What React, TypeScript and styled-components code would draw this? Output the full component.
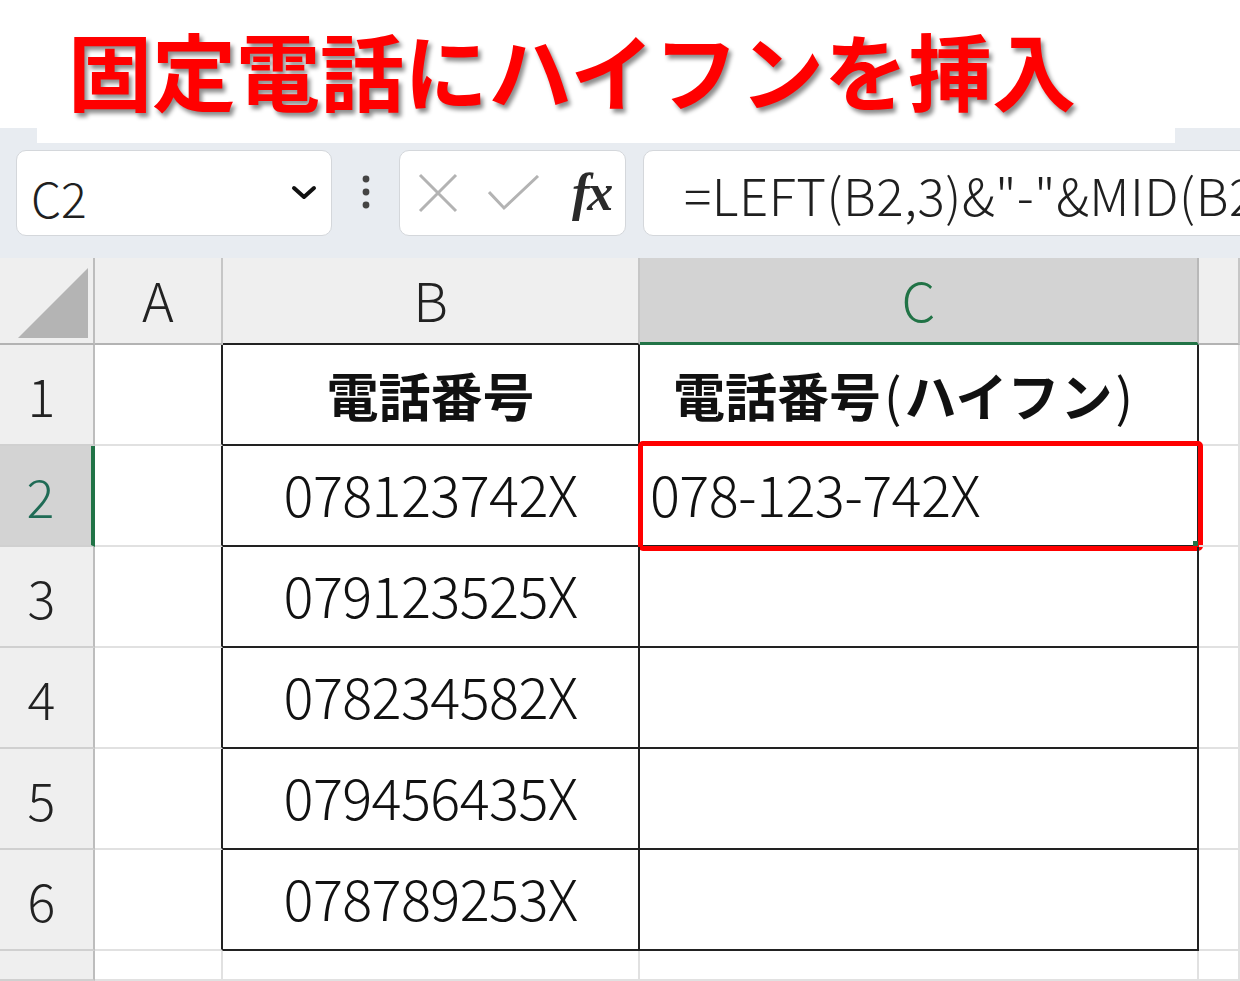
import React from 'react';
import styled, { createGlobalStyle } from 'styled-components';

const GlobalStyle = createGlobalStyle`
  html, body {
    margin: 0;
    padding: 0;
    background: #ffffff;
  }
  body {
    font-family: "Noto Sans CJK JP", "Noto Sans", sans-serif;
  }
`;

const GREEN = '#217346';
const GRID = '#e1e1e1';
const INK = '#222222';

const Page = styled.div`
  width: 1240px;
  height: 981px;
  overflow: hidden;
  display: flex;
  flex-direction: column;
  background: #ffffff;
`;

const TitleBar = styled.header`
  height: 128px;
  flex: none;
  box-sizing: border-box;
  padding: 27px 0 0 68px;
  background: #ffffff;
`;

const Title = styled.h1`
  margin: 0;
  font-family: "Noto Sans CJK JP", sans-serif;
  font-weight: 700;
  font-size: 84px;
  line-height: 1;
  color: #ff0000;
  letter-spacing: 0;
  text-shadow: 3px 4px 4px rgba(0, 0, 0, 0.45);
  white-space: nowrap;
`;

const Toolbar = styled.div`
  height: 130px;
  flex: none;
  display: flex;
  flex-direction: column;
  background: #e8ecf1;
  overflow: hidden;
`;

const TitleTail = styled.div`
  height: 15px;
  margin-left: 37px;
  width: 1138px;
  background: #ffffff;
`;

const Controls = styled.div`
  display: flex;
  align-items: stretch;
  height: 86px;
  margin-top: 7px;
  padding-left: 16px;
`;

const Box = styled.div<{ $w: number }>`
  width: ${p => p.$w}px;
  flex: none;
  box-sizing: border-box;
  background: #ffffff;
  border: 1px solid #d4d7db;
  border-radius: 10px;
  display: flex;
  align-items: center;
`;

const NameBox = styled(Box)`
  justify-content: space-between;
  padding: 0 14px 0 14px;
`;

const NameText = styled.span`
  font-family: "Noto Sans CJK JP", sans-serif;
  font-size: 48px;
  font-weight: 300;
  color: #1f1f1f;
  line-height: 1;
  margin-top: 8px;
`;

const Grip = styled.div`
  width: 67px;
  flex: none;
  display: flex;
  align-items: center;
  justify-content: center;
  padding-bottom: 2px;
`;

const FxBox = styled(Box)`
  padding-left: 18px;
  gap: 30px;
`;

const FxLabel = styled.span`
  font-family: "Liberation Serif", serif;
  font-style: italic;
  font-weight: 700;
  font-size: 52px;
  line-height: 1;
  color: #2b2b2b;
  margin-left: 2px;
  letter-spacing: -2px;
`;

const FormulaBox = styled(Box)`
  margin-left: 17px;
  padding-left: 40px;
  overflow: hidden;
`;

const FormulaText = styled.span`
  font-family: "Noto Sans CJK JP", sans-serif;
  font-size: 51px;
  font-weight: 300;
  letter-spacing: 0.5px;
  line-height: 1;
  color: #1f1f1f;
  white-space: nowrap;
  margin-top: 2px;
`;

const Sheet = styled.div`
  flex: 1;
  display: grid;
  grid-template-columns: 95px 128px 417px 559px 1fr;
  grid-template-rows: 87px repeat(6, 101px) 1fr;
  background: #ffffff;
`;

const Cell = styled.div<{ $r?: string; $b?: string; $rw?: number; $bw?: number }>`
  position: relative;
  box-sizing: border-box;
  display: flex;
  align-items: center;
  justify-content: center;
  border-right: ${p => p.$rw ?? 2}px solid ${p => p.$r ?? GRID};
  border-bottom: ${p => p.$bw ?? 2}px solid ${p => p.$b ?? GRID};
  font-family: "Noto Sans CJK JP", sans-serif;
  color: ${INK};
  min-width: 0;
`;

const Corner = styled(Cell)`
  background: #efefef;
  align-items: flex-end;
  justify-content: flex-end;
  padding: 0 5px 5px 0;
`;

const ColHead = styled(Cell)<{ $sel?: boolean }>`
  background: ${p => (p.$sel ? '#d3d3d3' : '#efefef')};
  color: ${p => (p.$sel ? GREEN : INK)};
  font-size: 54px;
  font-weight: 300;
  padding-bottom: 4px;
`;

const RowHead = styled(Cell)<{ $sel?: boolean }>`
  background: ${p => (p.$sel ? '#d3d3d3' : '#efefef')};
  color: ${p => (p.$sel ? '#1f6b55' : INK)};
  font-size: 52px;
  font-weight: 300;
  padding-right: 10px;
`;

const Heading = styled(Cell)<{ $shift?: number }>`
  font-size: 52px;
  font-weight: 700;
  color: #111111;
  padding-right: ${p => p.$shift ?? 0}px;
`;

const Paren = styled.span`
  font-weight: 400;
  margin: 0 3px;
`;

const Value = styled(Cell)<{ $left?: boolean }>`
  font-size: 56px;
  font-weight: 300;
  letter-spacing: -0.6px;
  color: #111111;
  padding-bottom: 6px;
  justify-content: ${p => (p.$left ? 'flex-start' : 'center')};
  padding-left: ${p => (p.$left ? '10px' : '0')};
`;

const Selection = styled.div`
  position: absolute;
  top: -5px;
  left: -2px;
  right: -6px;
  bottom: -6px;
  border: 5px solid #ff0000;
  border-radius: 5px;
  pointer-events: none;
`;

const FillHandle = styled.span`
  position: absolute;
  right: 0;
  bottom: 0;
  width: 5px;
  height: 5px;
  background: ${GREEN};
`;

const Chevron = () => (
  <svg width="26" height="16" viewBox="0 0 26 16">
    <path d="M3 3 L13 12 L23 3" fill="none" stroke="#111" strokeWidth="4" strokeLinecap="round" strokeLinejoin="round" />
  </svg>
);

const Dots = () => (
  <svg width="8" height="34" viewBox="0 0 8 34">
    <circle cx="4" cy="4" r="3.4" fill="#444" />
    <circle cx="4" cy="17" r="3.4" fill="#444" />
    <circle cx="4" cy="30" r="3.4" fill="#444" />
  </svg>
);

const CancelIcon = () => (
  <svg width="40" height="40" viewBox="0 0 40 40">
    <path d="M2 2 L38 38 M38 2 L2 38" stroke="#b3b3b3" strokeWidth="3" fill="none" />
  </svg>
);

const CheckIcon = () => (
  <svg width="52" height="36" viewBox="0 0 52 36">
    <path d="M1 17 L16 33 L50 1" stroke="#b3b3b3" strokeWidth="3" fill="none" />
  </svg>
);

const CornerMark = () => (
  <svg width="70" height="70" viewBox="0 0 70 70">
    <polygon points="70,0 70,70 0,70" fill="#b4b4b4" />
  </svg>
);

const numbers = ['078123742X', '079123525X', '078234582X', '079456435X', '078789253X'];

export default function App() {
  return (
    <Page>
      <GlobalStyle />
      <TitleBar>
        <Title>固定電話にハイフンを挿入</Title>
      </TitleBar>

      <Toolbar>
        <TitleTail />
        <Controls>
          <NameBox $w={316}>
            <NameText>C2</NameText>
            <Chevron />
          </NameBox>
          <Grip>
            <Dots />
          </Grip>
          <FxBox $w={227}>
            <CancelIcon />
            <CheckIcon />
            <FxLabel>fx</FxLabel>
          </FxBox>
          <FormulaBox $w={640}>
            <FormulaText>=LEFT(B2,3)&amp;"-"&amp;MID(B2,4,3)&amp;"-"&amp;RIGHT(B2,4)</FormulaText>
          </FormulaBox>
        </Controls>
      </Toolbar>

      <Sheet>
        <Corner $r="#bdbdbd" $b="#b3b3b3">
          <CornerMark />
        </Corner>
        <ColHead $r="#c6c6c6" $b="#b3b3b3">A</ColHead>
        <ColHead $r="#c6c6c6" $b={INK}>B</ColHead>
        <ColHead $sel $r="#b8b8b8" $b={GREEN} $bw={3}>C</ColHead>
        <ColHead $r="#c6c6c6" $b="#b3b3b3" />

        <RowHead $r="#bdbdbd" $b="#d0d0d0">1</RowHead>
        <Cell $r={INK} />
        <Heading $r={INK} $b={INK}>電話番号</Heading>
        <Heading $r={INK} $b={INK} $shift={28}>
          電話番号<Paren>(</Paren>ハイフン<Paren>)</Paren>
        </Heading>
        <Cell />

        {numbers.map((n, i) => {
          const row = i + 2;
          const sel = row === 2;
          return (
            <React.Fragment key={n}>
              <RowHead
                $sel={sel}
                $r={sel ? GREEN : '#bdbdbd'}
                $rw={sel ? 4 : 2}
                $b="#d0d0d0"
              >
                {row}
              </RowHead>
              <Cell $r={INK} />
              <Value $r={INK} $b={INK}>{n}</Value>
              <Value $r={INK} $b={INK} $left>
                {sel && '078-123-742X'}
                {sel && (
                  <Selection>
                    <FillHandle />
                  </Selection>
                )}
              </Value>
              <Cell />
            </React.Fragment>
          );
        })}

        <RowHead $r="#bdbdbd" $b="#d0d0d0" />
        <Cell />
        <Cell />
        <Cell />
        <Cell />
      </Sheet>
    </Page>
  );
}
